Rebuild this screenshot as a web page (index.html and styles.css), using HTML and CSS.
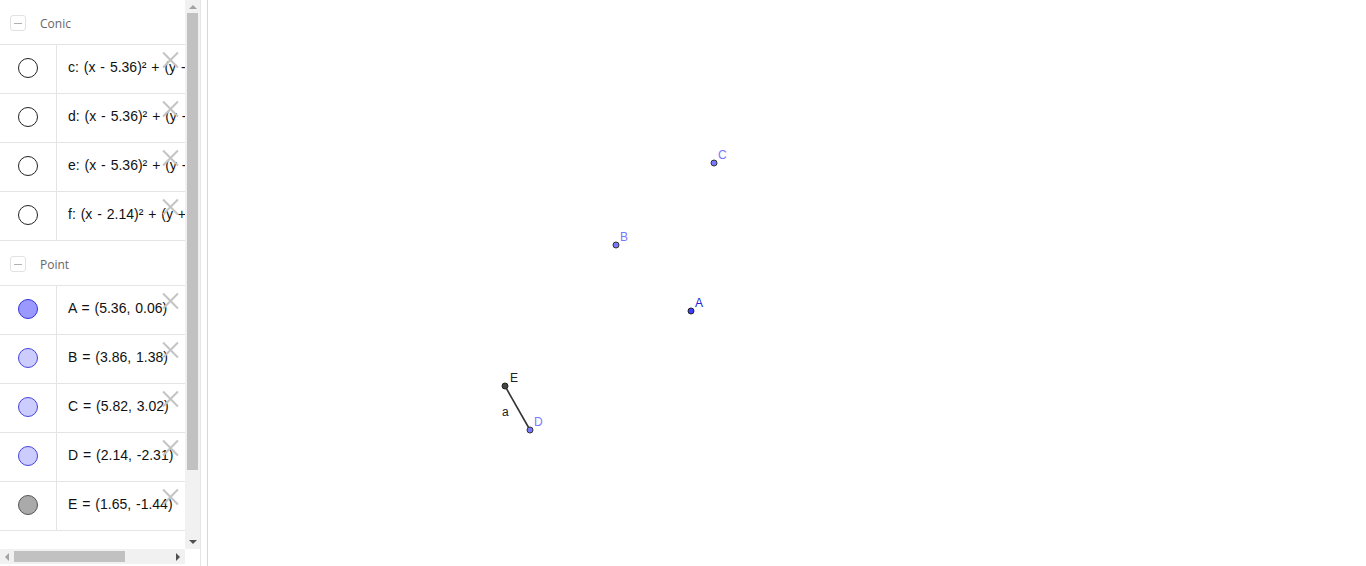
FILE: index.html
```html
<!DOCTYPE html>
<html>
<head>
<meta charset="utf-8">
<link rel="stylesheet" href="styles.css">
</head>
<body>
<div class="app">
  <div class="panel">
    <div class="panel-main">
      <div class="algebra">
        <div class="group">
          <div class="group-head"><span class="toggle"><span class="dash"></span></span><span class="group-name">Conic</span></div>
          <div class="row"><div class="marker"><span class="dot conic"></span></div><div class="expr">c: (x - 5.36)² + (y - 0.06)² = 1</div><span class="del"></span></div>
          <div class="row"><div class="marker"><span class="dot conic"></span></div><div class="expr">d: (x - 5.36)² + (y - 0.06)² = 4</div><span class="del"></span></div>
          <div class="row"><div class="marker"><span class="dot conic"></span></div><div class="expr">e: (x - 5.36)² + (y - 0.06)² = 9</div><span class="del"></span></div>
          <div class="row"><div class="marker"><span class="dot conic"></span></div><div class="expr">f: (x - 2.14)² + (y + 2.31)² = 1</div><span class="del"></span></div>
        </div>
        <div class="group">
          <div class="group-head"><span class="toggle"><span class="dash"></span></span><span class="group-name">Point</span></div>
          <div class="row"><div class="marker"><span class="dot pt-a"></span></div><div class="expr">A = (5.36, 0.06)</div><span class="del"></span></div>
          <div class="row"><div class="marker"><span class="dot pt-free"></span></div><div class="expr">B = (3.86, 1.38)</div><span class="del"></span></div>
          <div class="row"><div class="marker"><span class="dot pt-free"></span></div><div class="expr">C = (5.82, 3.02)</div><span class="del"></span></div>
          <div class="row"><div class="marker"><span class="dot pt-free"></span></div><div class="expr">D = (2.14, -2.31)</div><span class="del"></span></div>
          <div class="row"><div class="marker"><span class="dot pt-e"></span></div><div class="expr">E = (1.65, -1.44)</div><span class="del"></span></div>
        </div>
      </div>
      <div class="vscroll">
        <span class="arrow up"></span>
        <div class="vtrack"><div class="vthumb"></div></div>
        <span class="arrow down"></span>
      </div>
    </div>
    <div class="hscroll">
      <span class="arrow left"></span>
      <div class="htrack"><div class="hthumb"></div></div>
      <span class="arrow right"></span>
      <div class="corner"></div>
    </div>
  </div>
  <div class="splitter"></div>
  <div class="canvas">
    <svg class="graphics" width="1158" height="566" viewBox="0 0 1158 566">
      <line x1="297" y1="386" x2="322" y2="430" stroke="#333" stroke-width="1.6"/>
      <text x="294" y="416" class="lbl" fill="#222">a</text>
      <circle cx="506" cy="163" r="3" fill="#7777ff" stroke="#333" stroke-width="1"/>
      <text x="510" y="159" class="lbl" fill="#7777ff">C</text>
      <circle cx="408" cy="245" r="3" fill="#7777ff" stroke="#333" stroke-width="1"/>
      <text x="412" y="241" class="lbl" fill="#7777ff">B</text>
      <circle cx="483" cy="311" r="3" fill="#3d3dff" stroke="#222" stroke-width="1"/>
      <text x="487" y="307" class="lbl" fill="#2222dd">A</text>
      <circle cx="297" cy="386" r="3" fill="#444" stroke="#222" stroke-width="1"/>
      <text x="302" y="382" class="lbl" fill="#222">E</text>
      <circle cx="322" cy="430" r="3" fill="#7777ff" stroke="#333" stroke-width="1"/>
      <text x="326" y="426" class="lbl" fill="#7777ff">D</text>
    </svg>
  </div>
</div>
</body>
</html>
```

FILE: styles.css
```css
* { box-sizing: border-box; }
html, body { margin: 0; padding: 0; background: #fff; }
body { font-family: "Liberation Sans", Arial, sans-serif; overflow: hidden; }

.app { display: flex; width: 1366px; height: 566px; }

.panel { width: 200px; height: 566px; display: flex; flex-direction: column; flex: none; }
.panel-main { display: flex; height: 549px; }
.algebra { width: 185px; height: 549px; overflow: hidden; }

.group-head { height: 45px; display: flex; align-items: center; border-bottom: 1px solid #e4e4e4; padding-left: 10px; }
.toggle { width: 16px; height: 16px; border: 1px solid #e2e2e2; border-radius: 3px; display: flex; align-items: center; justify-content: center; margin-top: 2px; }
.dash { width: 8px; height: 1px; background: #b0b0b0; }
.group-name { margin-left: 14px; padding-top: 2px; font-family: "Open Sans", "Liberation Sans", sans-serif; font-size: 12px; color: #666; }

.row { position: relative; height: 49px; display: flex; border-bottom: 1px solid #e4e4e4; }
.marker { width: 57px; flex: none; border-right: 1px solid #e4e4e4; display: flex; align-items: center; justify-content: center; padding-bottom: 2px; }
.dot { width: 20px; height: 20px; border-radius: 50%; display: block; }
.dot.conic { background: #fff; border: 1px solid #222; }
.dot.pt-a { background: #9999ff; border: 1px solid #3333dd; }
.dot.pt-free { background: #ccccff; border: 1px solid #4444dd; }
.dot.pt-e { background: #aaaaaa; border: 1px solid #555; }
.expr { padding-left: 11px; display: flex; align-items: center; white-space: nowrap; font-size: 14px; word-spacing: 1px; color: #111; padding-bottom: 4px; }

.del { position: absolute; right: 7px; top: 7px; width: 16px; height: 16px; }
.del::before, .del::after { content: ""; position: absolute; left: -2px; top: 7px; width: 21px; height: 2px; background: #c4c4c4; }
.del::before { transform: rotate(45deg); }
.del::after { transform: rotate(-45deg); }

.vscroll { width: 15px; height: 549px; background: #f1f1f1; display: flex; flex-direction: column; align-items: center; }
.vtrack { flex: 1; width: 100%; padding: 0 2px; }
.vthumb { margin-top: 0; height: 457px; background: #c1c1c1; }
.arrow { display: block; width: 0; height: 0; flex: none; }
.arrow.up { margin: 5px 0 4px; border-left: 4px solid transparent; border-right: 4px solid transparent; border-bottom: 4px solid #a3a3a3; }
.arrow.down { margin: 4px 0 5px; border-left: 4px solid transparent; border-right: 4px solid transparent; border-top: 4px solid #505050; }

.hscroll { height: 15px; display: flex; align-items: center; background: #f1f1f1; width: 200px; }
.htrack { width: 162px; height: 100%; padding: 2px 0; margin-left: 5px; }
.hthumb { width: 111px; height: 100%; background: #c1c1c1; }
.arrow.left { margin-left: 5px; border-top: 4px solid transparent; border-bottom: 4px solid transparent; border-right: 4px solid #a3a3a3; }
.arrow.right { margin-left: 0; border-top: 4px solid transparent; border-bottom: 4px solid transparent; border-left: 4px solid #505050; }
.corner { margin-left: auto; width: 15px; height: 100%; background: #fff; }

.splitter { width: 8px; flex: none; border-left: 1px solid #e6e6e6; border-right: 1px solid #d8d8d8; background: #fff; }

.canvas { flex: 1; position: relative; }
.graphics { display: block; }
.lbl { font-family: "Liberation Sans", Arial, sans-serif; font-size: 12px; }
```
